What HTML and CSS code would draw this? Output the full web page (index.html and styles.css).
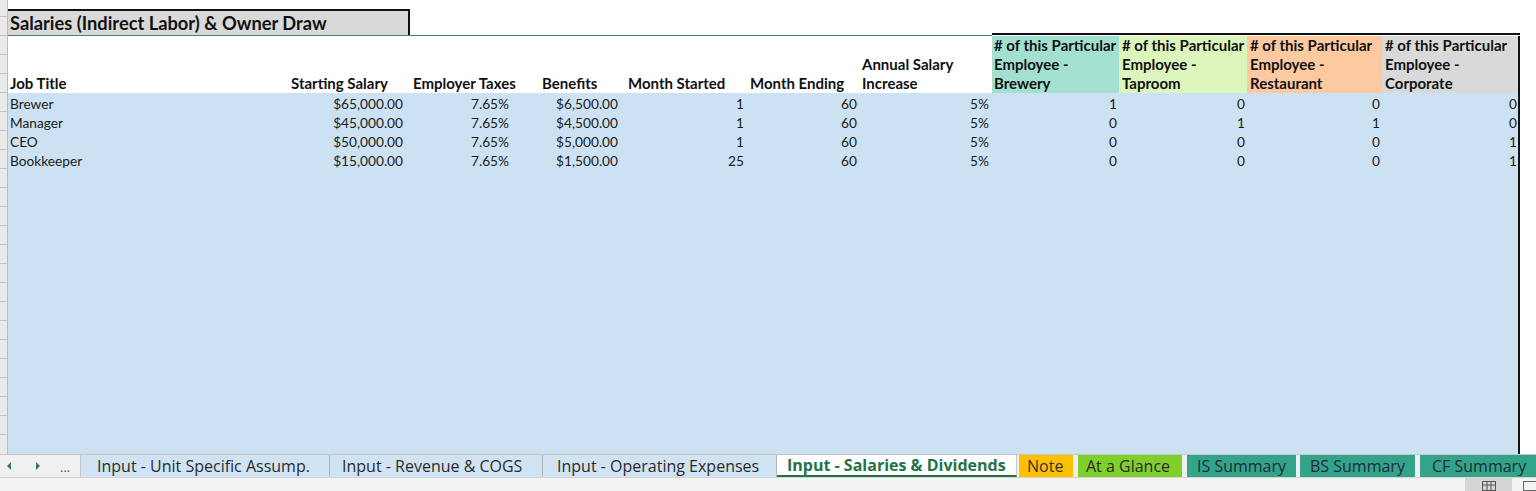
FILE: index.html
```html
<!DOCTYPE html>
<html>
<head>
<meta charset="utf-8">
<link rel="stylesheet" href="styles.css">
</head>
<body>
<div class="app">
  <div class="sheet">
    <div class="rowhdr"></div>
    <div class="grid">
      <div class="title-row">
        <div class="title-left">
          <div class="title">Salaries (Indirect Labor) &amp; Owner Draw</div>
        </div>
        <div class="title-right"></div>
        <div class="title-out"></div>
      </div>

      <div class="h c1">Job Title</div>
      <div class="h c2">Starting Salary</div>
      <div class="h c3">Employer Taxes</div>
      <div class="h c4">Benefits</div>
      <div class="h c5">Month Started</div>
      <div class="h c6">Month Ending</div>
      <div class="h c7">Annual Salary<br>Increase</div>
      <div class="h c8 brewery"># of this Particular<br>Employee -<br>Brewery</div>
      <div class="h c9 taproom"># of this Particular<br>Employee -<br>Taproom</div>
      <div class="h c10 restaurant"># of this Particular<br>Employee -<br>Restaurant</div>
      <div class="h c11 corporate edge"># of this Particular<br>Employee -<br>Corporate</div>
      <div class="out"></div>

      <div class="d c1">Brewer</div><div class="d c2 r">$65,000.00</div><div class="d c3 r">7.65%</div><div class="d c4 r">$6,500.00</div><div class="d c5 r">1</div><div class="d c6 r">60</div><div class="d c7 r">5%</div><div class="d c8 r">1</div><div class="d c9 r">0</div><div class="d c10 r">0</div><div class="d c11 r edge">0</div><div class="out"></div>
      <div class="d c1">Manager</div><div class="d c2 r">$45,000.00</div><div class="d c3 r">7.65%</div><div class="d c4 r">$4,500.00</div><div class="d c5 r">1</div><div class="d c6 r">60</div><div class="d c7 r">5%</div><div class="d c8 r">0</div><div class="d c9 r">1</div><div class="d c10 r">1</div><div class="d c11 r edge">0</div><div class="out"></div>
      <div class="d c1">CEO</div><div class="d c2 r">$50,000.00</div><div class="d c3 r">7.65%</div><div class="d c4 r">$5,000.00</div><div class="d c5 r">1</div><div class="d c6 r">60</div><div class="d c7 r">5%</div><div class="d c8 r">0</div><div class="d c9 r">0</div><div class="d c10 r">0</div><div class="d c11 r edge">1</div><div class="out"></div>
      <div class="d c1">Bookkeeper</div><div class="d c2 r">$15,000.00</div><div class="d c3 r">7.65%</div><div class="d c4 r">$1,500.00</div><div class="d c5 r">25</div><div class="d c6 r">60</div><div class="d c7 r">5%</div><div class="d c8 r">0</div><div class="d c9 r">0</div><div class="d c10 r">0</div><div class="d c11 r edge">1</div><div class="out"></div>

      <div class="filler edge"></div><div class="out"></div>
    </div>
  </div>

  <div class="tabbar">
    <div class="nav">
      <span class="arrow left"></span>
      <span class="arrow right"></span>
      <span class="dots">...</span>
    </div>
    <div class="tab blue t1">Input - Unit Specific Assump.</div>
    <div class="tab blue t2">Input - Revenue &amp; COGS</div>
    <div class="tab blue t3">Input - Operating Expenses</div>
    <div class="tab active">Input - Salaries &amp; Dividends</div>
    <div class="tab note">Note</div>
    <div class="tab glance">At a Glance</div>
    <div class="tab teal is">IS Summary</div>
    <div class="tab teal bs">BS Summary</div>
    <div class="tab teal cf">CF Summary</div>
  </div>

  <div class="status">
    <div class="status-fill"></div>
    <div class="view-btn on">
      <svg width="14" height="10" viewBox="0 0 14 10"><rect x="0.5" y="0.5" width="13" height="9" fill="none" stroke="#555"/><line x1="5" y1="0" x2="5" y2="10" stroke="#555"/><line x1="9" y1="0" x2="9" y2="10" stroke="#555"/><line x1="0" y1="4" x2="14" y2="4" stroke="#555"/></svg>
    </div>
    <div class="view-btn last">
      <svg width="14" height="10" viewBox="0 0 14 10"><rect x="0.5" y="0.5" width="13" height="9" fill="none" stroke="#666"/></svg>
    </div>
  </div>
</div>
</body>
</html>
```

FILE: styles.css
```css
* { box-sizing: border-box; }
html, body { margin: 0; padding: 0; }
body {
  width: 1536px;
  height: 491px;
  overflow: hidden;
  background: #fff;
  font-family: Lato, "Liberation Sans", sans-serif;
  color: #1a1a1a;
}
.app {
  display: flex;
  flex-direction: column;
  height: 491px;
}
.sheet {
  display: flex;
  height: 455px;
}
.rowhdr {
  width: 8px;
  flex: none;
  background-color: #e9e9e9;
  background-image: repeating-linear-gradient(to bottom, transparent 0, transparent 18px, #c4c4c4 18px, #c4c4c4 19px);
  background-position: 0 -2px;
  border-right: 1px solid #bdbdbd;
}
.grid {
  flex: 1;
  display: grid;
  grid-template-columns: 281px 119px 132px 85px 122px 113px 132px 127px 128px 135px 138px 1fr;
  grid-template-rows: 36px 57px 19px 19px 19px 19px 1fr;
  font-size: 13.7px;
}
.title-row {
  grid-column: 1 / -1;
  display: flex;
  align-items: stretch;
}
.title-left {
  width: 984px;
  padding-top: 9px;
  border-bottom: 1px solid #3f8a5a;
}
.title {
  width: 402px;
  height: 26px;
  background: #d9d9d9;
  border-top: 2px solid #111;
  border-right: 2px solid #111;
  font-weight: 700;
  font-size: 18.3px;
  line-height: 24px;
  padding-left: 2px;
  color: #111;
  white-space: nowrap;
}
.title-right {
  width: 528px;
  border-bottom: 2px solid #111;
  margin-bottom: 1px;
}
.title-out { flex: 1; }

.h {
  font-weight: 700;
  font-size: 15px;
  line-height: 19px;
  display: flex;
  align-items: flex-end;
  padding-left: 2px;
  white-space: nowrap;
  color: #111;
  overflow: hidden;
}
.h.c3 { padding-left: 5px; overflow: visible; }
.h.c5 { padding-left: 3px; }
.h.c6 { padding-left: 3px; }
.h.c9 { padding-left: 3px; }
.h.c10 { padding-left: 3px; }
.h.c11 { padding-left: 3px; }
.brewery { background: #a3e0cf; }
.taproom { background: #dbf5bd; }
.restaurant { background: #fcc9a1; }
.corporate { background: #d9d9d9; }

.d {
  background: #cce2f2;
  line-height: 19px;
  padding-left: 2px;
  padding-top: 1px;
  white-space: nowrap;
}
.d.r { text-align: right; padding-left: 0; padding-right: 2px; }
.d.c2 { padding-right: 5px; }
.d.c3 { padding-right: 31px; }
.d.c4 { padding-right: 7px; }
.d.c5 { padding-right: 3px; }
.d.c6 { padding-right: 3px; }
.d.c7 { padding-right: 3px; }
.d.c11 { padding-right: 1px; }

.edge { border-right: 2px solid #111; }
.out { background: #fff; }
.filler {
  grid-column: 1 / 12;
  background: #cce2f2;
}

/* tab bar */
.tabbar {
  height: 24px;
  display: flex;
  align-items: stretch;
  background: #f0f0f0;
  border-top: 1px solid #c6c6c6;
  border-bottom: 1px solid #d4d4d4;
  font-family: "Open Sans", "Noto Sans", sans-serif;
  font-size: 16px;
  color: #2b2b2b;
  overflow: hidden;
}
.nav {
  width: 81px;
  flex: none;
  display: flex;
  align-items: center;
  border-right: 1px solid #c6c6c6;
}
.arrow {
  width: 0;
  height: 0;
  border-top: 4px solid transparent;
  border-bottom: 4px solid transparent;
}
.arrow.left { border-right: 4px solid #3d7a55; margin-left: 7px; }
.arrow.right { border-left: 4px solid #3d7a55; margin-left: 25px; }
.dots { margin-left: 20px; color: #555; font-size: 13px; line-height: 1; padding-top: 2px; }
.tab {
  flex: none;
  display: flex;
  align-items: center;
  line-height: 22px;
  white-space: nowrap;
  overflow: hidden;
}
.tab.blue {
  background: #d0e3f3;
  border-right: 1px solid #b5b5b5;
}
.t1 { width: 249px; padding-left: 16px; }
.t2 { width: 213px; padding-left: 12px; }
.t3 { width: 234px; padding-left: 14px; }
.tab.active {
  width: 240px;
  background: #fff;
  color: #217346;
  font-weight: 700;
  padding-left: 10px;
  border-bottom: 2px solid #217346;
  border-right: 1px solid #c6c6c6;
}
.tab.note { width: 54px; background: #ffc000; color: #333; margin-left: 2px; padding-left: 8px; }
.tab.glance { width: 104px; background: #7fcf2d; color: #2a2a2a; margin-left: 5px; padding-left: 8px; }
.tab.teal { background: #33a48a; color: #1e2b3a; }
.tab.is { width: 109px; margin-left: 5px; padding-left: 10px; }
.tab.bs { width: 115px; margin-left: 4px; padding-left: 10px; }
.tab.cf { flex: 1; margin-left: 5px; padding-left: 12px; }

.status {
  flex: 1;
  display: flex;
  background: #f3f3f3;
}
.status-fill { flex: 1; }
.view-btn {
  width: 47px;
  display: flex;
  justify-content: center;
  align-items: flex-start;
  padding-top: 3px;
  margin-right: 8px;
}
.view-btn.on { background: #d6d6d6; }
.view-btn.last { width: 20px; margin-right: -4px; }
```
